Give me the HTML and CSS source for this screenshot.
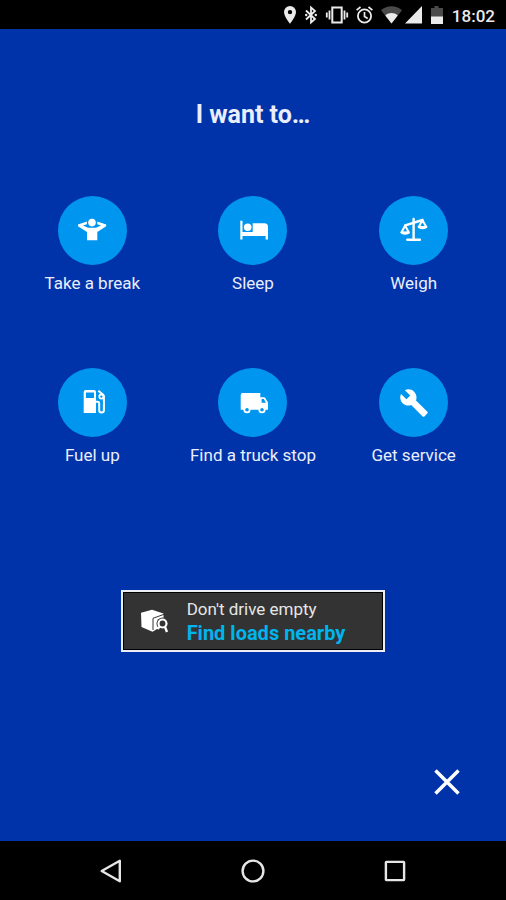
FILE: index.html
```html
<!DOCTYPE html>
<html lang="en">
<head>
<meta charset="utf-8">
<meta name="viewport" content="width=device-width, initial-scale=1">
<title>I want to…</title>
<link rel="stylesheet" href="styles.css">
</head>
<body>
<header class="status">
  <svg width="12" height="18" viewBox="0 0 12 18"><path fill-rule="evenodd" d="M6 0a6 6 0 0 0-6 6c0 4.500 6 11.800 6 11.800S12 10.500 12 6A6 6 0 0 0 6 0zm0 3.900a2.200 2.200 0 1 1 0 4.400 2.200 2.200 0 0 1 0-4.400z"/></svg>
  <svg width="14" height="18" viewBox="0 0 14 18"><path class="line" stroke-width="1.800" d="M2 4.500l9 8.500-4 3.500v-15L11 5l-9 8.500"/><circle cx="2.200" cy="9" r="1.200"/><circle cx="11.800" cy="9" r="1.200"/></svg>
  <svg width="22" height="18" viewBox="0 0 22 18"><rect class="line" x="6.300" y="1.500" width="9.400" height="15" stroke-width="2"/><path class="line" stroke-width="1.800" d="M3.500 4.500v9M.8 6.500v5M18.500 4.500v9M21.200 6.500v5"/></svg>
  <svg width="17" height="18" viewBox="0 0 17 18"><circle class="line" cx="8.500" cy="10" r="6.600" stroke-width="1.800"/><path class="line" stroke-width="1.700" d="M.6 4.200L4.500 1M16.400 4.200L12.500 1M8.500 6v4.500l3.200 2"/></svg>
  <div class="signals">
    <svg width="21" height="18" viewBox="0 0 21 18"><path class="dim" d="M0 4.200C6-1.200 15-1.200 21 4.200L10.500 17.500z"/><path d="M4.300 9.500c3.500-3.200 8.900-3.200 12.400 0l-6.200 8z"/></svg>
    <svg width="17" height="18" viewBox="0 0 17 18"><path d="M17 0v17.500H0z"/></svg>
  </div>
  <svg width="14" height="18" viewBox="0 0 14 18"><path class="dim" d="M1 2h3.500V0h4v2H13v9H1z"/><path d="M1 10.500h12V18H1z"/></svg>
  <time>18:02</time>
</header>
<main class="menu">
  <h1>I want to…</h1>
  <div class="actions">
    <button class="action" type="button">
      <span class="disc"><svg width="36" height="36" viewBox="0 0 36 36"><circle cx="18" cy="9.600" r="3.800"/><path d="M12.900 8.500L4 11.500v1.700l9 5.700v8.300h10.300v-8.300l8.900-5.700v-1.700l-8.900-3v2.700L27 12.400l-5 2.300h-8l-5-2.300 3.900-1.200z"/></svg></span>
      <span>Take a break</span>
    </button>
    <button class="action" type="button">
      <span class="disc"><svg width="36" height="36" viewBox="0 0 36 36"><circle cx="12.700" cy="14.200" r="3.800"/><path d="M5.300 7.800h2.200v11.300h10.200v-8.900h11.800q3.500 0 3.500 3.500v12.800h-2.400v-3.500H7.500v3.500H5.300z"/></svg></span>
      <span>Sleep</span>
    </button>
    <button class="action" type="button">
      <span class="disc"><svg width="36" height="36" viewBox="0 0 36 36"><path class="line" stroke-width="2.400" stroke-linecap="round" d="M17.600 6v20.500M11.300 26.700h12.600"/><path class="line" stroke-width="2.400" stroke-linecap="round" d="M9.200 12.300L26.500 7"/><path class="line" stroke-width="2" stroke-linejoin="round" d="M9.100 12.500L5.500 19.500h7.300zM26.400 7l-3.600 7h7.500z"/><path d="M4.300 18.800h9.700c0 4-9.700 4-9.700 0zM21.600 13.300h9.900c0 4-9.900 4-9.900 0z"/></svg></span>
      <span>Weigh</span>
    </button>
    <button class="action" type="button">
      <span class="disc"><svg width="36" height="36" viewBox="0 0 36 36"><path fill-rule="evenodd" d="M9.700 7q0-2 2-2H20q2 0 2 2v21H9.700zM11.900 7.400V13H20V7.400z"/><path class="line" stroke-width="2" d="M22 16.700h1.500q1.700 0 1.700 1.700v6.800c0 3 4.700 3 4.700 0V11.500q0-1-1-1.900l-4.600-3.800"/><circle class="line" cx="27.400" cy="11.600" r="2.100" stroke-width="1.800"/></svg></span>
      <span>Fuel up</span>
    </button>
    <button class="action" type="button">
      <span class="disc"><svg width="36" height="36" viewBox="0 0 36 36"><path fill-rule="evenodd" d="M5.700 10q0-2 2-2h17.600v4.300h3.500q1 0 1.500.8L33 17.500v7.200h-3.800a2.200 2.200 0 0 0-4.400 0H14.200a2.200 2.200 0 0 0-4.400 0H5.700zm20.900 4v3.700H31L28.800 14z"/><circle class="line" cx="12" cy="24.700" r="2.700" stroke-width="1.800"/><circle class="line" cx="27" cy="24.700" r="2.700" stroke-width="1.800"/></svg></span>
      <span>Find a truck stop</span>
    </button>
    <button class="action" type="button">
      <span class="disc"><svg width="36" height="36" viewBox="0 0 36 36"><path transform="translate(3 3) scale(1.250)" d="M22.700 19l-9.100-9.100c.9-2.300.4-5-1.500-6.900-2-2-5-2.400-7.400-1.300L9 6 6 9 1.600 4.700C.4 7.100.9 10.100 2.900 12.100c1.900 1.900 4.600 2.400 6.900 1.500l9.100 9.100c.4.4 1 .4 1.400 0l2.300-2.300c.5-.4.5-1.100.1-1.400z"/></svg></span>
      <span>Get service</span>
    </button>
  </div>
  <a class="loads" href="#loads">
    <svg width="28" height="24" viewBox="0 0 28 24"><path d="M0 3.800L11 .8l11.500 3.700V16L11.500 22.700.5 18z"/><path class="seam" d="M12 21V9.300l11-4"/><circle class="lens" cx="21.500" cy="14.500" r="6"/><circle class="line" cx="21.500" cy="14.500" r="4" stroke-width="2.200"/><path class="line" stroke-width="2.400" d="M24 18l2 5M18.800 17.500l-2.300 2.500"/></svg>
    <span class="loads-text"><span>Don't drive empty</span><strong>Find loads nearby</strong></span>
  </a>
  <button class="close" type="button" aria-label="Close"><svg width="26" height="26" viewBox="0 0 26 26"><path class="line" stroke-width="3.500" d="M1.500 1.500l23 23M24.500 1.500l-23 23"/></svg></button>
</main>
<nav class="system">
  <button type="button" aria-label="Back"><svg width="24" height="24" viewBox="0 0 24 24"><path class="line" stroke-width="2.400" stroke-linejoin="round" d="M2.700 12L20.800 1.800v20.400z"/></svg></button>
  <button type="button" aria-label="Home"><svg width="24" height="24" viewBox="0 0 24 24"><circle class="line" cx="12" cy="12" r="10.400" stroke-width="2.400"/></svg></button>
  <button type="button" aria-label="Recent apps"><svg width="24" height="24" viewBox="0 0 24 24"><rect class="line" x="2.900" y="2.900" width="18.200" height="18.200" rx="0.500" stroke-width="2.400"/></svg></button>
</nav>
</body>
</html>
```
FILE: styles.css
```css
* {
  box-sizing: border-box;
}

body {
  margin: 0;
  min-height: 100vh;
  display: flex;
  flex-direction: column;
  background: #0033aa;
  color: #eaeefa;
  font-family: Roboto, "Liberation Sans", sans-serif;
  font-size: 17px;
  line-height: 24px;
}

button {
  padding: 0;
  border: 0;
  background: none;
  color: inherit;
  font: inherit;
  cursor: pointer;
}

svg {
  display: block;
  flex: none;
  fill: currentColor;
  overflow: visible;
}

.line {
  fill: none;
  stroke: currentColor;
}

.dim {
  fill: #4a4a4a;
}

.lens {
  fill: #333;
}

.seam {
  fill: none;
  stroke: #333;
  stroke-width: 1;
}

.status {
  display: flex;
  align-items: center;
  justify-content: flex-end;
  gap: 8px;
  height: 29px;
  padding: 0 11px;
  background: #000;
  color: #ebebeb;
  font-weight: 500;
}

.status time {
  padding-top: 2px;
}

.signals {
  display: flex;
  gap: 3px;
}

.menu {
  flex: 1;
  display: flex;
  flex-direction: column;
  align-items: center;
  padding: 72px 12px 46px;
}

h1 {
  margin: 0 0 67px;
  font-size: 25px;
  line-height: 28px;
  font-weight: 700;
}

.actions {
  align-self: stretch;
  display: grid;
  grid-template-columns: repeat(3, 1fr);
  row-gap: 73px;
}

.action {
  display: flex;
  flex-direction: column;
  align-items: center;
  gap: 6px;
  white-space: nowrap;
}

.disc {
  display: flex;
  align-items: center;
  justify-content: center;
  width: 69px;
  height: 69px;
  border-radius: 50%;
  background: #0095ee;
  color: #fff;
}

.loads {
  display: flex;
  align-items: center;
  gap: 18px;
  margin: 123px 0 24px;
  padding: 5px 38px 5px 18px;
  border: 2px solid #eceef5;
  box-shadow: inset 0 0 0 1px #000;
  background: #333;
  color: #fff;
  text-decoration: none;
}

.loads-text {
  display: flex;
  flex-direction: column;
  color: #e6e6e6;
}

.loads strong {
  color: #00b5ed;
  font-size: 20px;
}

.close {
  align-self: flex-end;
  margin: auto 34px 0 0;
  color: #fff;
}

.system {
  display: flex;
  align-items: center;
  justify-content: center;
  gap: 118px;
  height: 59px;
  background: #000;
  color: #e6e6e6;
}
```
